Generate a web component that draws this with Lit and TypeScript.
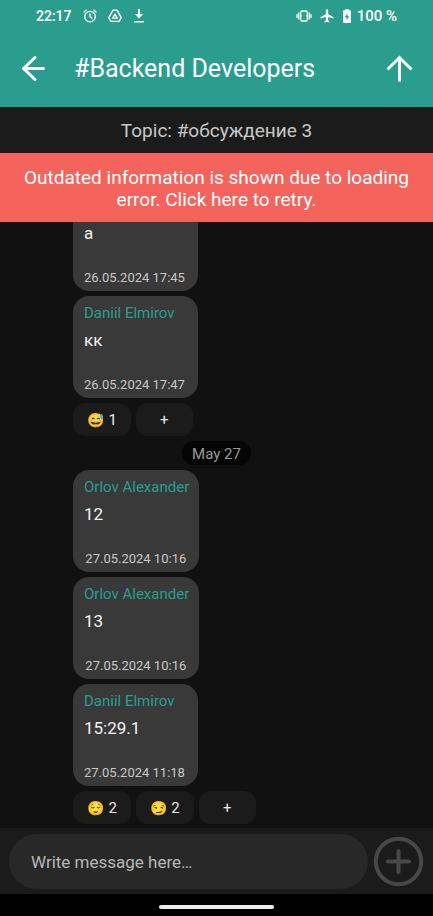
import { LitElement, html, css, nothing } from "lit";
import { customElement, property } from "lit/decorators.js";

interface Reaction {
  emoji: string;
  label: string;
  count: number;
}

interface Message {
  author: string;
  text: string;
  time: string;
  reactions: Reaction[];
}

interface Day {
  label: string;
  messages: Message[];
}

const days: Day[] = [
  {
    label: "",
    messages: [
      { author: "", text: "a", time: "26.05.2024 17:45", reactions: [] },
      {
        author: "Daniil Elmirov",
        text: "кк",
        time: "26.05.2024 17:47",
        reactions: [{ emoji: "😅", label: "sweat smile", count: 1 }],
      },
    ],
  },
  {
    label: "May 27",
    messages: [
      { author: "Orlov Alexander", text: "12", time: "27.05.2024 10:16", reactions: [] },
      { author: "Orlov Alexander", text: "13", time: "27.05.2024 10:16", reactions: [] },
      {
        author: "Daniil Elmirov",
        text: "15:29.1",
        time: "27.05.2024 11:18",
        reactions: [
          { emoji: "😌", label: "relieved", count: 2 },
          { emoji: "😏", label: "smirk", count: 2 },
        ],
      },
    ],
  },
];

@customElement("status-bar")
export class StatusBar extends LitElement {
  static styles = css`
    :host {
      display: flex;
      align-items: center;
      justify-content: space-between;
      height: 31px;
      padding: 0 36px;
      color: #fff;
      font: 500 15px/20px Roboto, sans-serif;
    }
    .group {
      display: flex;
      align-items: center;
    }
    .left {
      gap: 11px;
      font-size: 14px;
    }
    .right {
      gap: 5px;
    }
    svg {
      display: block;
      fill: none;
      stroke: #fff;
      stroke-linecap: round;
      stroke-linejoin: round;
    }
    .solid {
      fill: #fff;
      stroke: none;
    }
  `;

  render() {
    return html`
      <div class="group left">
        <span>22:17</span>
        <svg width="14" height="14" viewBox="0 0 14 14" stroke-width="1.3">
          <circle cx="7" cy="7.6" r="5.3" />
          <path d="M7 4.8v3l2 1.4M1 3l2.2-1.9M13 3l-2.2-1.9" />
        </svg>
        <svg width="14" height="14" viewBox="0 0 14 14" stroke-width="1.4">
          <path d="M5 1.2h4l4.2 7.4-2 3.8H2.800l-2-3.800z" />
          <path d="M7 5.1l2.3 4H4.700z" />
        </svg>
        <svg class="solid" width="12" height="14" viewBox="0 0 12 14">
          <path d="M5 0h2v5h3l-4 4.500L2 5h3zM1 12h10v1.500H1z" />
        </svg>
      </div>
      <div class="group right">
        <svg width="16" height="12" viewBox="0 0 16 12" stroke-width="1.3">
          <rect x="4.8" y="1" width="6.4" height="10" rx="1" />
          <path d="M2.800 3v6M13.200 3v6M1 4.600v2.800M15 4.600v2.800" />
        </svg>
        <svg class="solid" width="20" height="14" viewBox="-3 0 20 14">
          <path
            d="M13.500 9.600V8.300L8.100 5V1.300a1.100 1.100 0 0 0-2.200 0V5L.5 8.300v1.300l5.400-1.600v3.300l-1.500 1.100v1.100L7 12.800l2.600.7v-1.100l-1.500-1.100V8z"
          />
        </svg>
        <svg class="solid" width="10" height="14" viewBox="0 0 10 14">
          <path
            fill-rule="evenodd"
            d="M3.200 0h3.600v1.300h1.400c.5 0 .8.300.8.800v11c0 .5-.3.900-.8.900H1.800c-.5 0-.8-.4-.8-.9v-11c0-.5.300-.8.800-.8h1.400zM5.500 4.300L2.700 8.300h1.800v3l2.800-4H5.500z"
          />
        </svg>
        <span>100 %</span>
      </div>
    `;
  }
}

@customElement("chat-message")
export class ChatMessage extends LitElement {
  @property({ attribute: false }) message!: Message;

  static styles = css`
    :host {
      display: flex;
      flex-direction: column;
      align-items: flex-start;
      gap: 5px;
      flex: none;
      padding-left: 73px;
      font-family: Roboto, sans-serif;
    }
    .bubble {
      box-sizing: border-box;
      display: flex;
      flex-direction: column;
      min-height: 102px;
      padding: 8px 10px 5px 11px;
      border-radius: 16px;
      background: #393939;
    }
    .author {
      min-height: 18px;
      color: #2a9d8f;
      font-size: 15px;
      line-height: 18px;
    }
    .text {
      flex: 1;
      margin: 8px 0;
      color: #f2f2f2;
      font-size: 17px;
      line-height: 20px;
    }
    .time {
      align-self: flex-end;
      margin-right: 3px;
      color: #c8c8c8;
      font-size: 13px;
      line-height: 16px;
    }
    .reactions {
      display: flex;
      gap: 5px;
    }
    .reaction {
      display: flex;
      align-items: center;
      justify-content: center;
      gap: 4px;
      height: 33px;
      padding: 0 14px;
      border: 0;
      border-radius: 12px;
      background: #1b1b1b;
      color: #e8e8e8;
      font: 15px/18px Roboto, "Noto Color Emoji", sans-serif;
    }
    .emoji {
      font-size: 14px;
    }
    .add {
      width: 57px;
    }
  `;

  render() {
    const { author, text, time, reactions } = this.message;
    return html`
      <article class="bubble">
        <span class="author">${author}</span>
        <span class="text">${text}</span>
        <time class="time">${time}</time>
      </article>
      ${reactions.length
        ? html`<div class="reactions">
            ${reactions.map(
              (r) => html`<button class="reaction" aria-label="${r.label} ${r.count}">
                <span class="emoji">${r.emoji}</span><span>${r.count}</span>
              </button>`
            )}
            <button class="reaction add" aria-label="Add reaction">+</button>
          </div>`
        : nothing}
    `;
  }
}

@customElement("app-root")
export class AppRoot extends LitElement {
  static styles = css`
    :host {
      display: flex;
      flex-direction: column;
      height: 100vh;
      overflow: hidden;
      background: #111;
      font-family: Roboto, sans-serif;
    }
    .top {
      background: #2a9d8f;
    }
    .toolbar {
      display: flex;
      align-items: center;
      height: 76px;
      padding: 0 18px;
    }
    .title {
      flex: 1;
      margin: 0 0 0 26px;
      color: #fff;
      font-size: 25px;
      font-weight: 400;
      line-height: 32px;
    }
    .icon {
      display: block;
      padding: 0;
      border: 0;
      background: none;
    }
    .icon svg {
      display: block;
      fill: none;
      stroke: #fff;
      stroke-width: 3;
    }
    .topic {
      margin: 0;
      padding: 13px 16px 11px;
      background: #1b1b1b;
      color: #c8c8c8;
      font-size: 19px;
      font-weight: 400;
      line-height: 22px;
      text-align: center;
    }
    .banner {
      padding: 14px 16px 11px;
      border: 0;
      background: #f4645c;
      color: #fff;
      font: 19px/22px Roboto, sans-serif;
      text-align: center;
    }
    .list {
      flex: 1;
      min-height: 0;
      display: flex;
      flex-direction: column;
      justify-content: flex-end;
      gap: 5px;
      padding-bottom: 4px;
      overflow: hidden;
    }
    .day {
      align-self: center;
      flex: none;
      padding: 3px 10px 1px;
      border-radius: 12px;
      background: #050505;
      color: #999;
      font-size: 15px;
      line-height: 20px;
    }
    .composer {
      display: flex;
      align-items: center;
      gap: 5px;
      padding: 6px 9px 5px;
      background: #1b1b1b;
    }
    .field {
      flex: 1;
      min-width: 0;
      box-sizing: border-box;
      height: 55px;
      padding: 0 22px;
      border: 0;
      border-radius: 28px;
      background: #282828;
      color: #f2f2f2;
      font: 17px/20px Roboto, sans-serif;
    }
    .field::placeholder {
      color: #b8b8b8;
      opacity: 1;
    }
    .attach svg {
      stroke: #484848;
      stroke-width: 4;
      stroke-linecap: round;
    }
    .nav {
      display: flex;
      align-items: center;
      justify-content: center;
      height: 22px;
      background: #000;
    }
    .handle {
      width: 115px;
      height: 4px;
      margin-top: 3px;
      border-radius: 2px;
      background: #ececec;
    }
  `;

  render() {
    return html`
      <header class="top">
        <status-bar></status-bar>
        <div class="toolbar">
          <button class="icon" aria-label="Back">
            <svg width="30" height="32" viewBox="0 0 30 32" stroke-linecap="round" stroke-linejoin="round">
              <path d="M25.500 15.500H5.500M17 4.500L5.500 15.500L17 26.500" />
            </svg>
          </button>
          <h1 class="title">#Backend Developers</h1>
          <button class="icon" aria-label="Scroll up">
            <svg width="32" height="32" viewBox="0 0 32 32">
              <path d="M16.500 28.500V4.500M4.500 16.500L16.500 4.500L28.500 16.500" />
            </svg>
          </button>
        </div>
      </header>
      <h2 class="topic">Topic: #обсуждение 3</h2>
      <button class="banner">Outdated information is shown due to loading error. Click here to retry.</button>
      <main class="list">
        ${days.map(
          (day) => html`
            ${day.label ? html`<span class="day">${day.label}</span>` : nothing}
            ${day.messages.map((m) => html`<chat-message .message=${m}></chat-message>`)}
          `
        )}
      </main>
      <form class="composer" @submit=${(e: Event) => e.preventDefault()}>
        <input class="field" type="text" aria-label="Message" placeholder="Write message here…" />
        <button class="icon attach" type="button" aria-label="Attach">
          <svg width="51" height="51" viewBox="0 0 51 51">
            <circle cx="25.5" cy="25.5" r="22.7" />
            <path d="M25.500 15v21M15 25.500h21" />
          </svg>
        </button>
      </form>
      <footer class="nav"><div class="handle"></div></footer>
    `;
  }
}
